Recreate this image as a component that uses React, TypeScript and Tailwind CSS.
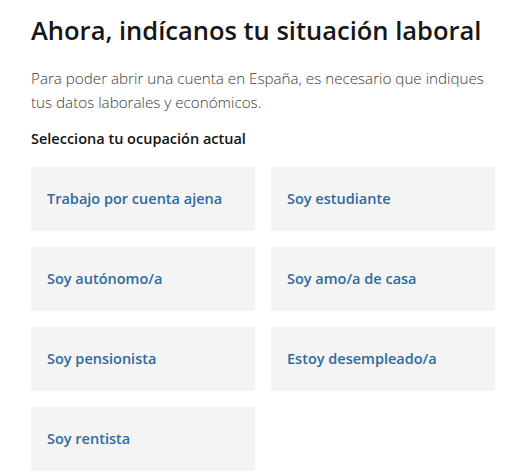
const OPTIONS = [
  "Trabajo por cuenta ajena",
  "Soy estudiante",
  "Soy autónomo/a",
  "Soy amo/a de casa",
  "Soy pensionista",
  "Estoy desempleado/a",
  "Soy rentista",
];

export default function App() {
  return (
    <div className="min-h-[474px] bg-white pl-[31px] pr-[28px] pt-[10px] font-['Open_Sans',sans-serif]">
      <h1 className="text-[25.5px] font-semibold leading-[40px] text-[#161616]">
        Ahora, indícanos tu situación laboral
      </h1>
      <p className="mt-[16px] w-[456px] text-[15.2px] font-light leading-[24px] text-[#3a3a3a]">
        Para poder abrir una cuenta en España, es necesario que indiques tus datos laborales y
        económicos.
      </p>
      <h2 className="mt-[14px] text-[14.5px] font-semibold leading-[22px] text-[#121212]">
        Selecciona tu ocupación actual
      </h2>
      <div className="mt-[17px] grid w-[464px] grid-cols-2 gap-4">
        {OPTIONS.map((label) => (
          <button
            key={label}
            type="button"
            className="flex h-16 items-center bg-[#f4f4f4] px-4 text-left text-[14.5px] font-semibold text-[#2f6aa0]"
          >
            {label}
          </button>
        ))}
      </div>
    </div>
  );
}
